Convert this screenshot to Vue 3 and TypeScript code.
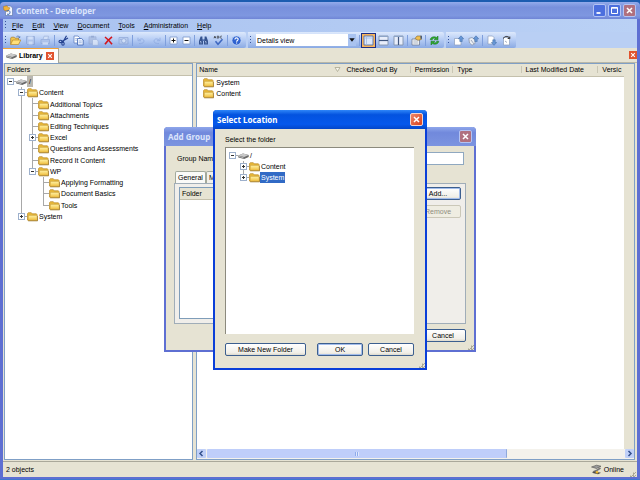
<script setup lang="ts">
import { ref } from 'vue'

interface TreeRow {
  label: string
  guides: string
  box?: 'plus' | 'minus'
  icon: 'folder' | 'drive'
  state?: 'dim' | 'active'
}
interface Tool {
  icon: string
  name: string
  kind?: 'sep' | 'small' | 'on' | 'off'
}

const menus: string[] = ['File', 'Edit', 'View', 'Document', 'Tools', 'Administration', 'Help']

const sep: Tool = { icon: '', name: '', kind: 'sep' }
const mainTools: Tool[] = [
  { icon: 'open', name: 'Open' },
  { icon: 'save', name: 'Save', kind: 'off' },
  { icon: 'print', name: 'Print', kind: 'off' },
  sep,
  { icon: 'cut', name: 'Cut' },
  { icon: 'copy', name: 'Copy' },
  { icon: 'paste', name: 'Paste', kind: 'off' },
  { icon: 'delete', name: 'Delete' },
  { icon: 'camera', name: 'Preview', kind: 'off' },
  sep,
  { icon: 'undo', name: 'Undo', kind: 'off' },
  { icon: 'redo', name: 'Redo', kind: 'off' },
  sep,
  { icon: 'expand', name: 'Expand', kind: 'small' },
  { icon: 'collapse', name: 'Collapse', kind: 'small' },
  sep,
  { icon: 'find', name: 'Find' },
  { icon: 'spell', name: 'Spelling' },
  sep,
  { icon: 'help', name: 'Help' },
]
const viewTools: Tool[] = [
  sep,
  { icon: 'single', name: 'Single pane', kind: 'on' },
  { icon: 'rows', name: 'Split rows' },
  { icon: 'columns', name: 'Split columns' },
  sep,
  { icon: 'props', name: 'Properties' },
  sep,
  { icon: 'refresh', name: 'Refresh' },
]
const syncTools: Tool[] = [
  { icon: 'checkin', name: 'Check in' },
  { icon: 'checkinall', name: 'Check in all' },
  sep,
  { icon: 'checkout', name: 'Check out' },
  { icon: 'revert', name: 'Undo check out' },
]

// Guides: "|" passes through, "T" branches, "L" ends a branch, "R" starts at the root.
const folders: TreeRow[] = [
  { label: '/', guides: 'R', box: 'minus', icon: 'drive', state: 'dim' },
  { label: 'Content', guides: ' T', box: 'minus', icon: 'folder' },
  { label: 'Additional Topics', guides: ' |T', icon: 'folder' },
  { label: 'Attachments', guides: ' |T', icon: 'folder' },
  { label: 'Editing Techniques', guides: ' |T', icon: 'folder' },
  { label: 'Excel', guides: ' |T', box: 'plus', icon: 'folder' },
  { label: 'Questions and Assessments', guides: ' |T', icon: 'folder' },
  { label: 'Record It Content', guides: ' |T', icon: 'folder' },
  { label: 'WP', guides: ' |L', box: 'minus', icon: 'folder' },
  { label: 'Applying Formatting', guides: ' | T', icon: 'folder' },
  { label: 'Document Basics', guides: ' | T', icon: 'folder' },
  { label: 'Tools', guides: ' | L', icon: 'folder' },
  { label: 'System', guides: ' L', box: 'plus', icon: 'folder' },
]
const locations: TreeRow[] = [
  { label: '/', guides: 'R', box: 'minus', icon: 'drive' },
  { label: 'Content', guides: ' T', box: 'plus', icon: 'folder' },
  { label: 'System', guides: ' L', box: 'plus', icon: 'folder', state: 'active' },
]
const files: string[] = ['System', 'Content']
const view = ref('Details view')
const groupName = ref('')

function guideClass(c: string): string {
  if (c === '|') return 'up down'
  if (c === 'T') return 'up down right'
  if (c === 'L') return 'up right'
  if (c === 'R') return 'right'
  return ''
}
</script>

<template>
  <svg class="defs" aria-hidden="true">
    <defs>
      <linearGradient id="gFolder" x1="0" y1="0" x2="0" y2="1">
        <stop offset="0" stop-color="#fff3a6" /><stop offset="1" stop-color="#f0bd3c" />
      </linearGradient>
      <symbol id="folder" viewBox="0 0 11 11">
        <path d="M.5 9V2.6l.8-.9h3l.9 1.1h4.2l.6.7V9z" fill="#e9b93a" stroke="#b98a2a" stroke-width=".7" />
        <path d="M1 9.400 1.300 4.300h8.800L10.500 9.400z" fill="url(#gFolder)" stroke="#c4952d" stroke-width=".6" />
        <path d="M1.200 9.900h9.400V5" fill="none" stroke="#8c6a22" stroke-width=".6" />
      </symbol>
      <symbol id="drive" viewBox="0 0 11 11">
        <path d="M.3 5.600 5 3.400l5.700 1.500v2L6.200 9 .3 7.400z" fill="#6a6a6a" />
        <path d="M.3 5.600 5 3.400l5.700 1.500L6.200 7z" fill="#c9c9c9" />
        <path d="M.8 6.400l4.800 1.400" stroke="#e8e8e8" stroke-width=".6" />
      </symbol>
      <symbol id="close" viewBox="0 0 11 11">
        <path d="M3 3l5 5M8 3l-5 5" stroke="#fff" stroke-width="1.5" fill="none" />
      </symbol>
      <symbol id="logo" viewBox="0 0 11 11">
        <path d="M2.500 1h5l2 2v7.500h-7z" fill="#f3f6ff" stroke="#56709f" stroke-width=".6" />
        <path d="M.5 1.500 4 .8l1 1.800 2 .2L5 6.500.8 5z" fill="#f1b33a" stroke="#a9761c" stroke-width=".5" />
        <path d="M3 6.500c2-2 4-1 4 1S5 9.800 4 9" fill="none" stroke="#3c68b8" />
      </symbol>
      <symbol id="open" viewBox="0 0 11 11">
        <path d="M.7 9.500V3l.8-.8h2.700l.8 1h3.500V5" fill="#f3c74f" stroke="#a97d22" stroke-width=".7" />
        <path d="M.7 9.500 2.800 5h8L8.500 9.500z" fill="#ffe07a" stroke="#b98a2a" stroke-width=".7" />
        <path d="M6.500 1.600c1.500-1 2.700-.3 3 1M8.500 2.600h1.300V1.200" fill="none" stroke="#3b62a8" stroke-width=".7" />
      </symbol>
      <symbol id="save" viewBox="0 0 11 11">
        <path d="M1.500 1.500h8v8h-7l-1-1z" fill="#aec2e8" stroke="#7f98ca" stroke-width=".8" />
        <path d="M3.200 1.500h4.600v3H3.200zM3.600 6.500h4v3h-4z" fill="#dce7fa" />
      </symbol>
      <symbol id="print" viewBox="0 0 11 11">
        <path d="M3 4.500 4 1.200h4.500l-.7 3.300" fill="#dce7fa" stroke="#8da3cf" stroke-width=".7" />
        <path d="M1 4.500h8.500v4H1z" fill="#aec2e8" stroke="#859dce" stroke-width=".7" />
        <path d="M2.500 7.300H8v2.400H2.500z" fill="#dce7fa" />
      </symbol>
      <symbol id="cut" viewBox="0 0 11 11">
        <path d="M8.500.8 4.800 7.300M10 3 3.500 6.700" stroke="#23408f" stroke-width="1.200" fill="none" />
        <ellipse cx="2.600" cy="6.400" rx="1.600" ry="1.200" fill="none" stroke="#23408f" stroke-width="1.100" />
        <ellipse cx="5" cy="8.800" rx="1.200" ry="1.500" fill="none" stroke="#23408f" stroke-width="1.100" />
      </symbol>
      <symbol id="copy" viewBox="0 0 11 11">
        <path d="M1 1h4l1.500 1.500V8H1z" fill="#fff" stroke="#5f82c2" stroke-width=".8" />
        <path d="M4.500 3.500h4L10.200 5v5H4.500z" fill="#eef4ff" stroke="#3f65b0" stroke-width=".8" />
        <path d="M5.700 6h3M5.700 7.700h3M2.200 3.500h2M2.200 5.200h2" stroke="#7396cf" stroke-width=".6" />
      </symbol>
      <symbol id="paste" viewBox="0 0 11 11">
        <path d="M1 1.800h7V9H1z" fill="#a9bbdd" stroke="#8ca2cf" stroke-width=".7" />
        <path d="M3 .8h3v1.700H3z" fill="#8399c6" />
        <path d="M4.500 4.500h4.200L10.200 6v4.300H4.500z" fill="#e6edf9" stroke="#98acd3" stroke-width=".7" />
      </symbol>
      <symbol id="delete" viewBox="0 0 11 11">
        <path d="M2 2c2.500 2 5 4.500 7 7.200M9 1.800C6.500 3.800 4 6.200 2 9.200" stroke="#d3161c" stroke-width="1.600" fill="none" />
      </symbol>
      <symbol id="camera" viewBox="0 0 11 11">
        <path d="M1 2.500h9v6.500H1z" fill="#b7c9ea" stroke="#849ccf" stroke-width=".8" />
        <circle cx="5.800" cy="5.800" r="2.200" fill="#dfe9fa" stroke="#7e98cd" stroke-width=".8" />
        <path d="M2.300 4h1.200v1H2.300z" fill="#7e98cd" />
      </symbol>
      <symbol id="undo" viewBox="0 0 11 11">
        <path d="M3 8.500c4 .4 5.800-1.500 4.500-3.700C6.500 3.300 4 3.800 2.500 5.300M2 2.700v3h3" stroke="#8ba7df" stroke-width="1" fill="none" />
      </symbol>
      <symbol id="redo" viewBox="0 0 11 11">
        <path d="M8 8.500c-4 .4-5.800-1.500-4.500-3.700C4.500 3.300 7 3.800 8.500 5.300M9 2.700v3H6" stroke="#8ba7df" stroke-width="1" fill="none" />
      </symbol>
      <symbol id="expand" viewBox="0 0 11 11">
        <path d="M2 2h7v7H2z" fill="#fff" stroke="#7b98c9" stroke-width=".8" />
        <path d="M3.500 5.500h4M5.500 3.500v4" stroke="#111" />
      </symbol>
      <symbol id="collapse" viewBox="0 0 11 11">
        <path d="M2 2h7v7H2z" fill="#fff" stroke="#7b98c9" stroke-width=".8" />
        <path d="M3.500 5.500h4" stroke="#111" />
      </symbol>
      <symbol id="find" viewBox="0 0 11 11">
        <path d="M2.600 1.500h1.800v2L5 5v4.500H1V6zM6.600 1.500h1.800L10 6v3.500H6V5l.6-1.500z" fill="#365490" />
        <path d="M4.500 4.300h2v1.700h-2z" fill="#5877b5" />
        <path d="M2 6.500h1v2M7 6.500h1v2" stroke="#c7d8f5" stroke-width=".7" fill="none" />
      </symbol>
      <symbol id="spell" viewBox="0 0 11 11">
        <path d="M1 3.300 1.900 1l.9 2.300M1.300 2.500h1.200M4.300 3.200V1.100h.9c.9 0 .9 1 0 1 1 0 1 1.100 0 1.100zM9 1.400c-.8-.7-1.800-.2-1.800.8s1 1.500 1.800.8" stroke="#222" stroke-width=".6" fill="none" />
        <path d="M2.500 6.300 5 9.300 9.500 4.200" stroke="#3d67c0" stroke-width="1.500" fill="none" />
      </symbol>
      <symbol id="help" viewBox="0 0 11 11">
        <circle cx="5.500" cy="5.500" r="4.600" fill="#2f62d0" stroke="#c8daf7" stroke-width=".8" />
        <path d="M3.900 4.400c0-2 3.300-2 3.300-.1 0 1.200-1.600 1.200-1.600 2.400M5.600 7.500v1" stroke="#fff" stroke-width="1.100" fill="none" />
      </symbol>
      <symbol id="single" viewBox="0 0 11 11">
        <path d="M1 1h9v9H1z" fill="#dce8fb" stroke="#5273ab" stroke-width=".9" />
        <path d="M3.500 1v9M1 3h9" stroke="#a3bbe2" stroke-width=".8" />
      </symbol>
      <symbol id="rows" viewBox="0 0 11 11">
        <path d="M1 1h9v9H1z" fill="#e8eefb" stroke="#8593ab" stroke-width=".9" />
        <path d="M1 5.500h9" stroke="#40577f" stroke-width="1.200" /><path d="M1 1.500h9" stroke="#8da5c8" />
      </symbol>
      <symbol id="columns" viewBox="0 0 11 11">
        <path d="M1 1h9v9H1z" fill="#e8eefb" stroke="#8593ab" stroke-width=".9" />
        <path d="M5.500 1v9" stroke="#40577f" stroke-width="1.200" /><path d="M1 1.500h9" stroke="#8da5c8" />
      </symbol>
      <symbol id="props" viewBox="0 0 11 11">
        <path d="M1 4h7.500v6H1z" fill="#fafafa" stroke="#6f7c96" stroke-width=".8" />
        <path d="M2.300 6h5M2.300 8h5" stroke="#8290a8" stroke-width=".7" />
        <path d="M4 3.500 6 1h4.300v3.500L7 5.300z" fill="#f0bf52" stroke="#7d6330" stroke-width=".6" />
        <path d="M9.500.8h1.300v3H9.500z" fill="#33507e" />
      </symbol>
      <symbol id="refresh" viewBox="0 0 11 11">
        <path d="M1.200 4.800C1.500 2 5 .9 7.700 2.400L9 1v3.800H5.200l1.300-1.300C5 2.800 3.400 3.400 3.200 4.800z" fill="#2faa2c" stroke="#116e18" stroke-width=".5" />
        <path d="M9.800 6.200C9.500 9 6 10.100 3.300 8.600L2 10V6.200h3.800L4.500 7.500c1.500.7 3.100.1 3.300-1.300z" fill="#2faa2c" stroke="#116e18" stroke-width=".5" />
      </symbol>
      <symbol id="checkin" viewBox="0 0 11 11">
        <path d="M1.500 3.500h5L8 5v5H1.500z" fill="#fff" stroke="#8a9cbc" stroke-width=".7" />
        <path d="M8 .8 10.700 3.800H9.200V6.500H6.800V3.800H5.300z" fill="#6797d8" stroke="#3c689f" stroke-width=".5" />
      </symbol>
      <symbol id="checkinall" viewBox="0 0 11 11">
        <path d="M.8 3.500 4 2.500l3 2v4l-3 1.700L1.500 8z" fill="#e9edf3" stroke="#7f8da5" stroke-width=".7" />
        <path d="M3 5l3 4" stroke="#7f8da5" stroke-width=".7" />
        <path d="M8 .8 10.700 3.800H9.200V6.500H6.800V3.800H5.300z" fill="#6797d8" stroke="#3c689f" stroke-width=".5" />
      </symbol>
      <symbol id="checkout" viewBox="0 0 11 11">
        <path d="M2 1h4.500L8 2.500V9H2z" fill="#fff" stroke="#8a9cbc" stroke-width=".7" />
        <path d="M8 10.300 5.300 7.500h1.500V4.800h2.400v2.700h1.500z" fill="#6797d8" stroke="#3c689f" stroke-width=".5" />
      </symbol>
      <symbol id="revert" viewBox="0 0 11 11">
        <path d="M2.500 2.500h6V10h-6z" fill="#fff" stroke="#8a9cbc" stroke-width=".7" />
        <path d="M2.500 3.500C3 1 7 .6 8.800 3.200M8.800 1.500v2H6.700" fill="none" stroke="#333" stroke-width="1" />
        <path d="M4 6l2 1.500" stroke="#7d8ba6" stroke-width=".7" />
      </symbol>
      <symbol id="online" viewBox="0 0 11 11">
        <path d="M.5 3 5.500 1.200l4.500 1L5.500 4.500z" fill="#9a9a9a" stroke="#3a3a3a" stroke-width=".5" />
        <path d="M9.500 4 6 6.200 2 8" stroke="#777" stroke-width="1.600" fill="none" />
        <path d="M.8 8.800 4 7.500l6 1.300-3 1.500z" fill="#4a4a4a" /><circle cx="6" cy="8.300" r="1.300" fill="#e8b32e" />
      </symbol>
    </defs>
  </svg>

  <main class="window">
    <header class="title">
      <svg class="ico"><use href="#logo" /></svg>
      <h1>Content - Developer</h1>
      <button class="cap" aria-label="Minimize"><svg viewBox="0 0 11 11"><path d="M2.500 8h4" stroke="#fff" stroke-width="1.800" /></svg></button>
      <button class="cap" aria-label="Maximize"><svg viewBox="0 0 11 11"><path d="M2.500 2.500h6v6h-6zM2.500 3.200h6" stroke="#fff" fill="none" /></svg></button>
      <button class="cap dull" aria-label="Close"><svg><use href="#close" /></svg></button>
    </header>

    <div class="frame">
      <nav class="menu">
        <i class="grip"></i>
        <button v-for="m in menus" :key="m"><u>{{ m[0] }}</u>{{ m.slice(1) }}</button>
      </nav>

      <div class="bars">
        <div class="bar">
          <i class="grip"></i>
          <template v-for="(t, i) in mainTools" :key="i">
            <i v-if="t.kind === 'sep'" class="sep"></i>
            <button v-else class="tool" :class="t.kind" :aria-label="t.name"><svg class="ico"><use :href="'#' + t.icon" /></svg></button>
          </template>
        </div>
        <div class="bar">
          <i class="grip"></i>
          <div class="combo">
            <select v-model="view" aria-label="View"><option>Details view</option></select>
            <svg class="drop" viewBox="0 0 7 11"><path d="M1 4h5L3.500 7z" fill="#111" /></svg>
          </div>
          <template v-for="(t, i) in viewTools" :key="i">
            <i v-if="t.kind === 'sep'" class="sep"></i>
            <button v-else class="tool" :class="t.kind" :aria-label="t.name"><svg class="ico"><use :href="'#' + t.icon" /></svg></button>
          </template>
        </div>
        <div class="bar">
          <i class="grip"></i>
          <template v-for="(t, i) in syncTools" :key="i">
            <i v-if="t.kind === 'sep'" class="sep"></i>
            <button v-else class="tool" :class="t.kind" :aria-label="t.name"><svg class="ico"><use :href="'#' + t.icon" /></svg></button>
          </template>
        </div>
      </div>

      <div class="doctabs">
        <div class="doctab">
          <svg class="ico"><use href="#drive" /></svg>
          <span>Library</span>
          <button class="x" aria-label="Close Library"><svg><use href="#close" /></svg></button>
        </div>
        <button class="x" aria-label="Close all"><svg><use href="#close" /></svg></button>
      </div>

      <div class="work">
        <section class="pane side">
          <h2 class="head">Folders</h2>
          <ul class="tree main">
            <li v-for="r in folders" :key="r.label">
              <span v-for="(g, i) in r.guides" :key="i" class="guide" :class="guideClass(g)">
                <b v-if="r.box && i === r.guides.length - 1" class="box" :class="r.box"></b>
              </span>
              <svg class="ico"><use :href="'#' + r.icon" /></svg>
              <span class="name" :class="r.state">{{ r.label }}</span>
            </li>
          </ul>
        </section>

        <section class="pane list">
          <div class="scroll">
            <table>
              <colgroup><col class="c1" /><col class="c2" /><col class="c3" /><col class="c4" /><col class="c5" /><col /></colgroup>
              <thead>
                <tr>
                  <th><div class="sort">Name<svg viewBox="0 0 7 7"><path d="M1 1.500h5L3.500 5.500z" fill="#f6f4ea" stroke="#aaa791" stroke-width=".8" /></svg></div></th>
                  <th>Checked Out By</th>
                  <th>Permission</th>
                  <th>Type</th>
                  <th>Last Modified Date</th>
                  <th>Versic</th>
                </tr>
              </thead>
              <tbody>
                <tr v-for="f in files" :key="f">
                  <td colspan="6"><div class="file"><svg class="ico"><use href="#folder" /></svg>{{ f }}</div></td>
                </tr>
              </tbody>
            </table>
            <div class="gutter"></div>
          </div>
          <div class="hbar">
            <button aria-label="Scroll left"><svg viewBox="0 0 9 9"><path d="M5.500 2 3 4.500 5.500 7" stroke="#33508c" stroke-width="1.500" fill="none" /></svg></button>
            <div class="track"><div class="thumb"><i></i></div></div>
            <button aria-label="Scroll right"><svg viewBox="0 0 9 9"><path d="M3.500 2 6 4.500 3.500 7" stroke="#33508c" stroke-width="1.500" fill="none" /></svg></button>
          </div>
        </section>
      </div>

      <footer class="status">
        <span>2 objects</span>
        <svg class="ico"><use href="#online" /></svg>
        <span>Online</span>
        <i class="size"></i>
      </footer>
    </div>
  </main>

  <section class="dialog group" role="dialog" aria-label="Add Group">
    <header><h2>Add Group</h2><button class="cap dull" aria-label="Close"><svg><use href="#close" /></svg></button></header>
    <div class="body">
      <div class="field">
        <label for="gname">Group Name:</label>
        <input id="gname" v-model="groupName" type="text" />
      </div>
      <div class="tabs"><button class="on">General</button><button>Members</button></div>
      <div class="panel">
        <div class="grid"><div class="head">Folder</div></div>
        <div class="side-buttons">
          <button class="btn default">Add...</button>
          <button class="btn" disabled>Remove</button>
        </div>
      </div>
      <div class="actions"><button class="btn">Cancel</button></div>
    </div>
    <i class="size"></i>
  </section>

  <section class="dialog locate" role="dialog" aria-label="Select Location">
    <header><h2>Select Location</h2><button class="cap red" aria-label="Close"><svg><use href="#close" /></svg></button></header>
    <div class="body">
      <p>Select the folder</p>
      <ul class="tree well">
        <li v-for="r in locations" :key="r.label">
          <span v-for="(g, i) in r.guides" :key="i" class="guide" :class="guideClass(g)">
            <b v-if="r.box && i === r.guides.length - 1" class="box" :class="r.box"></b>
          </span>
          <svg class="ico"><use :href="'#' + r.icon" /></svg>
          <span class="name" :class="r.state">{{ r.label }}</span>
        </li>
      </ul>
      <div class="actions">
        <button class="btn wide">Make New Folder</button>
        <button class="btn default">OK</button>
        <button class="btn">Cancel</button>
      </div>
    </div>
    <i class="size"></i>
  </section>
</template>

<style>
body {
  margin: 0;
  background: #1f5fb8;
  overflow: hidden;
}
#app {
  position: relative;
  font: 7px/11px "Liberation Sans", Arial, sans-serif;
  color: #000;
}
</style>

<style scoped>
* {
  box-sizing: border-box;
}
button, input, select {
  font: inherit;
  color: inherit;
  margin: 0;
  padding: 0;
  border: 0;
  background: none;
}
h1, h2, p, ul {
  margin: 0;
  padding: 0;
  font: inherit;
  list-style: none;
}
svg {
  display: block;
}
.defs {
  position: absolute;
  width: 0;
  height: 0;
}
.ico {
  width: 11px;
  height: 11px;
  flex: none;
}
.window {
  display: flex;
  flex-direction: column;
  height: 100vh;
  border-top: 2px solid #1c5cb0;
  border-bottom: 1px solid #3f78cf;
}
.title {
  display: flex;
  align-items: center;
  gap: 2px;
  height: 17px;
  padding: 0 4px 0 3px;
  border-radius: 4px 4px 0 0;
  background: linear-gradient(#93abeb, #7890dc 30%, #7e97e0 80%, #6f85d6);
}
.title h1 {
  flex: 1;
  font: bold 8px/11px "Noto Sans", sans-serif;
  color: #dbe4fb;
}
.cap {
  width: 13px;
  height: 13px;
  border: 1px solid #b3c3f3;
  border-radius: 2px;
  background: #4c6fde;
}
.cap svg {
  width: 11px;
  height: 11px;
}
.cap.dull {
  background: #b0707f;
}
.cap.red {
  border-color: #f3d4cc;
  background: linear-gradient(135deg, #ec8768, #d8401c);
}
.frame {
  flex: 1;
  display: flex;
  flex-direction: column;
  min-height: 0;
  border: solid #5e6fd2;
  border-width: 0 3px 2px;
  background: #e6e3d3;
}
.menu {
  display: flex;
  align-items: center;
  height: 13px;
  background: linear-gradient(90deg, #a9c2f0, #bad1f5);
}
.menu button {
  padding: 0 4px;
  margin-right: 1px;
}
.menu u {
  text-underline-offset: 1px;
}
.grip {
  width: 1px;
  height: 9px;
  margin: 0 2px;
  background: repeating-linear-gradient(#37559c 0 1px, transparent 1px 3px);
}
.bars {
  display: flex;
  gap: 2px;
  height: 16px;
  background: #b9cff4;
}
.bar {
  display: flex;
  align-items: center;
  padding-right: 2px;
  border-radius: 0 2px 2px 0;
  background: linear-gradient(#dde9fc, #b4cbf4 50%, #8baae3);
}
.tool {
  display: grid;
  place-items: center;
  width: 15px;
  height: 15px;
}
.tool.small {
  width: 13px;
}
.tool.off {
  opacity: .7;
}
.tool.on {
  border: 1px solid #1c2f86;
  background: #f7b45c;
}
.sep {
  width: 1px;
  height: 11px;
  margin: 0 1px;
  background: #7f9fdc;
}
.combo {
  display: flex;
  width: 100px;
  height: 12px;
  margin: 0 2px 0 3px;
  background: #fff;
}
.combo select {
  flex: 1;
  appearance: none;
  padding-left: 1px;
}
.drop {
  width: 8px;
  height: 12px;
  background: #a9c3f0;
}
.doctabs {
  display: flex;
  align-items: center;
  justify-content: space-between;
  height: 15px;
  border-bottom: 1px solid #b9b7a8;
}
.doctab {
  display: flex;
  align-items: center;
  gap: 2px;
  width: 56px;
  height: 15px;
  padding-left: 3px;
  border-top: 1px solid #f2a43a;
  border-right: 1px solid #a8a698;
  background: #fdfdfb;
  font-weight: bold;
}
.x {
  width: 8px;
  height: 8px;
  background: #e1532d;
}
.doctab .x {
  margin-left: 1px;
}
.x svg {
  width: 8px;
  height: 8px;
}
.work {
  flex: 1;
  display: flex;
  gap: 3px;
  min-height: 0;
  padding: 0 2px 0 1px;
}
.pane {
  border: 1px solid #7f9fc6;
  background: #fff;
}
.side {
  width: 30%;
}
.list {
  flex: 1;
  display: flex;
  flex-direction: column;
  min-width: 0;
}
.head {
  height: 12px;
  padding-left: 2px;
  border-bottom: 1px solid #c4c0ac;
  background: #e6e3d3;
}
.tree li {
  display: flex;
  align-items: center;
  min-height: 0;
}
.tree.main {
  display: grid;
  grid-auto-rows: 1fr;
  height: 146px;
}
.guide {
  flex: none;
  display: grid;
  place-items: center;
  width: 11px;
  height: 100%;
  background-repeat: no-repeat;
  --v: linear-gradient(#a8a8a8, #a8a8a8);
}
.guide.up.down {
  background-image: var(--v);
  background-size: 1px 100%;
  background-position: 5px 0;
}
.guide.right {
  background-image: var(--v);
  background-size: 6px 1px;
  background-position: 5px 5px;
}
.guide.up.right {
  background-image: var(--v), var(--v);
  background-size: 1px 50%, 6px 1px;
  background-position: 5px 0, 5px 5px;
}
.guide.up.down.right {
  background-size: 1px 100%, 6px 1px;
}
.box {
  width: 7px;
  height: 7px;
  border: 1px solid #9db0cc;
  background: linear-gradient(#333, #333) center / 3px 1px no-repeat, #fff;
}
.box.plus {
  background: linear-gradient(#333, #333) center / 3px 1px no-repeat, linear-gradient(#333, #333) center / 1px 3px no-repeat, #fff;
}
.name {
  padding: 0 1px;
  white-space: nowrap;
}
.name.dim {
  padding: 0 2px;
  background: #b9b7b0;
}
.name.active {
  background: #316ac5;
  color: #fff;
}
.scroll {
  flex: 1;
  display: flex;
  min-height: 0;
  overflow: hidden;
}
table {
  flex: 1;
  align-self: flex-start;
  width: 0;
  table-layout: fixed;
  border-collapse: collapse;
}
.c1 { width: 34%; }
.c2 { width: 16%; }
.c3 { width: 10%; }
.c4 { width: 16%; }
.c5 { width: 18%; }
th {
  height: 12px;
  padding: 0 0 0 4px;
  border-bottom: 1px solid #c4c0ac;
  background: linear-gradient(#c9c6b4, #c9c6b4) right center / 1px 7px no-repeat, #e6e3d3;
  font-weight: normal;
  text-align: left;
  white-space: nowrap;
}
th:first-child {
  padding: 0 1px 0 2px;
  background: #e6e3d3;
}
th:last-child {
  background: #e6e3d3;
}
td {
  padding: 0;
}
.sort {
  display: flex;
  align-items: center;
  justify-content: space-between;
}
.sort svg {
  width: 7px;
  height: 7px;
}
.file {
  display: flex;
  gap: 2px;
  padding-left: 6px;
}
.gutter {
  width: 10px;
  background: #e6e3d3;
}
.hbar {
  display: flex;
  gap: 1px;
  height: 10px;
  background: #f4f2ec;
}
.hbar button {
  width: 9px;
  height: 9px;
  border-radius: 1px;
  background: #c0d0f8;
}
.track {
  flex: 1;
}
.thumb {
  display: grid;
  place-items: center;
  width: 72%;
  height: 9px;
  border-right: 1px solid #8ea9dc;
  border-radius: 1px;
  background: #bfcefa;
}
.thumb i {
  width: 4px;
  height: 4px;
  background: repeating-linear-gradient(90deg, #8fabeb 0 1px, #dfe8fd 1px 2px);
}
.status {
  display: flex;
  align-items: center;
  gap: 2px;
  height: 16px;
  margin-top: 1px;
  padding: 0 1px 0 3px;
  border-top: 1px solid #aaa89a;
}
.status span:first-child {
  flex: 1;
}
.size {
  align-self: flex-end;
  width: 7px;
  height: 7px;
  margin-left: 3px;
  background: repeating-conic-gradient(#aaa894 0 25%, transparent 0 50%) 0 0 / 3px 3px;
  clip-path: polygon(100% 0, 100% 100%, 0 100%);
}
.dialog {
  position: absolute;
  display: flex;
  flex-direction: column;
  border: solid #5e6fd2;
  border-width: 0 2px 2px;
  border-radius: 4px 4px 0 0;
  background: #e6e3d3;
}
.dialog header {
  display: flex;
  align-items: center;
  justify-content: space-between;
  height: 19px;
  margin: 0 -2px;
  padding: 0 4px;
  border-radius: 4px 4px 0 0;
  background: linear-gradient(#8ea6ea, #7189dc 30%, #7c94e0);
  color: #dbe4fb;
}
.dialog h2 {
  font: bold 8px/11px "Noto Sans", sans-serif;
}
.dialog > .size {
  position: absolute;
  right: 0;
  bottom: 0;
}
.body {
  flex: 1;
  display: flex;
  flex-direction: column;
}
.group {
  left: 164px;
  top: 127px;
  width: 312px;
  height: 225px;
}
.locate {
  left: 213px;
  top: 110px;
  width: 214px;
  height: 260px;
  border-color: #0a3fd8;
}
.locate header {
  background: linear-gradient(#2f86f8, #0353df 25%, #0558ec 75%, #0346c8);
  color: #fff;
}
.group .body {
  padding: 6px 8px 8px;
}
.field {
  display: flex;
  align-items: center;
  padding: 0 2px 0 3px;
}
.field label {
  width: 50px;
}
.field input {
  flex: 1;
  height: 13px;
  border: 1px solid #8fa8c0;
  background: #fff;
}
.tabs {
  display: flex;
  margin-top: 6px;
  padding-left: 1px;
}
.tabs button {
  height: 12px;
  padding: 0 2px;
  border: 1px solid #a3a99c;
  border-bottom: 0;
  border-radius: 2px 2px 0 0;
  background: #f2f0ea;
}
.tabs button.on {
  background: #fafaf8;
}
.panel {
  flex: 1;
  display: flex;
  gap: 4px;
  padding: 3px 4px 4px;
  border: 1px solid #a0adb8;
  background: #f0eeea;
}
.grid {
  flex: 1;
  border: 1px solid #7f9db9;
  background: #fff;
}
.side-buttons {
  display: flex;
  flex-direction: column;
  gap: 5px;
}
.btn {
  width: 46px;
  height: 13px;
  border: 1px solid #3c5f8f;
  border-radius: 2px;
  background: linear-gradient(#fff, #f1efe8 80%, #dcd8cc);
  line-height: 10px;
}
.btn.default {
  box-shadow: inset 0 0 0 1px #a3bdeb;
}
.btn:disabled {
  border-color: #cbc8b8;
  background: #efede2;
  color: #8e8c80;
}
.actions {
  display: flex;
  justify-content: flex-end;
  gap: 5px;
  padding-top: 5px;
}
.locate .body {
  padding: 5px 11px 12px 10px;
}
.well {
  flex: 1;
  margin-top: 2px;
  padding: 2px 1px;
  border: solid #8c8a7d;
  border-width: 1px 0 0 1px;
  background: #fff;
}
.well li {
  height: 11px;
}
.locate .actions {
  padding-top: 9px;
}
.btn.wide {
  width: 81px;
  margin-right: auto;
}
</style>
